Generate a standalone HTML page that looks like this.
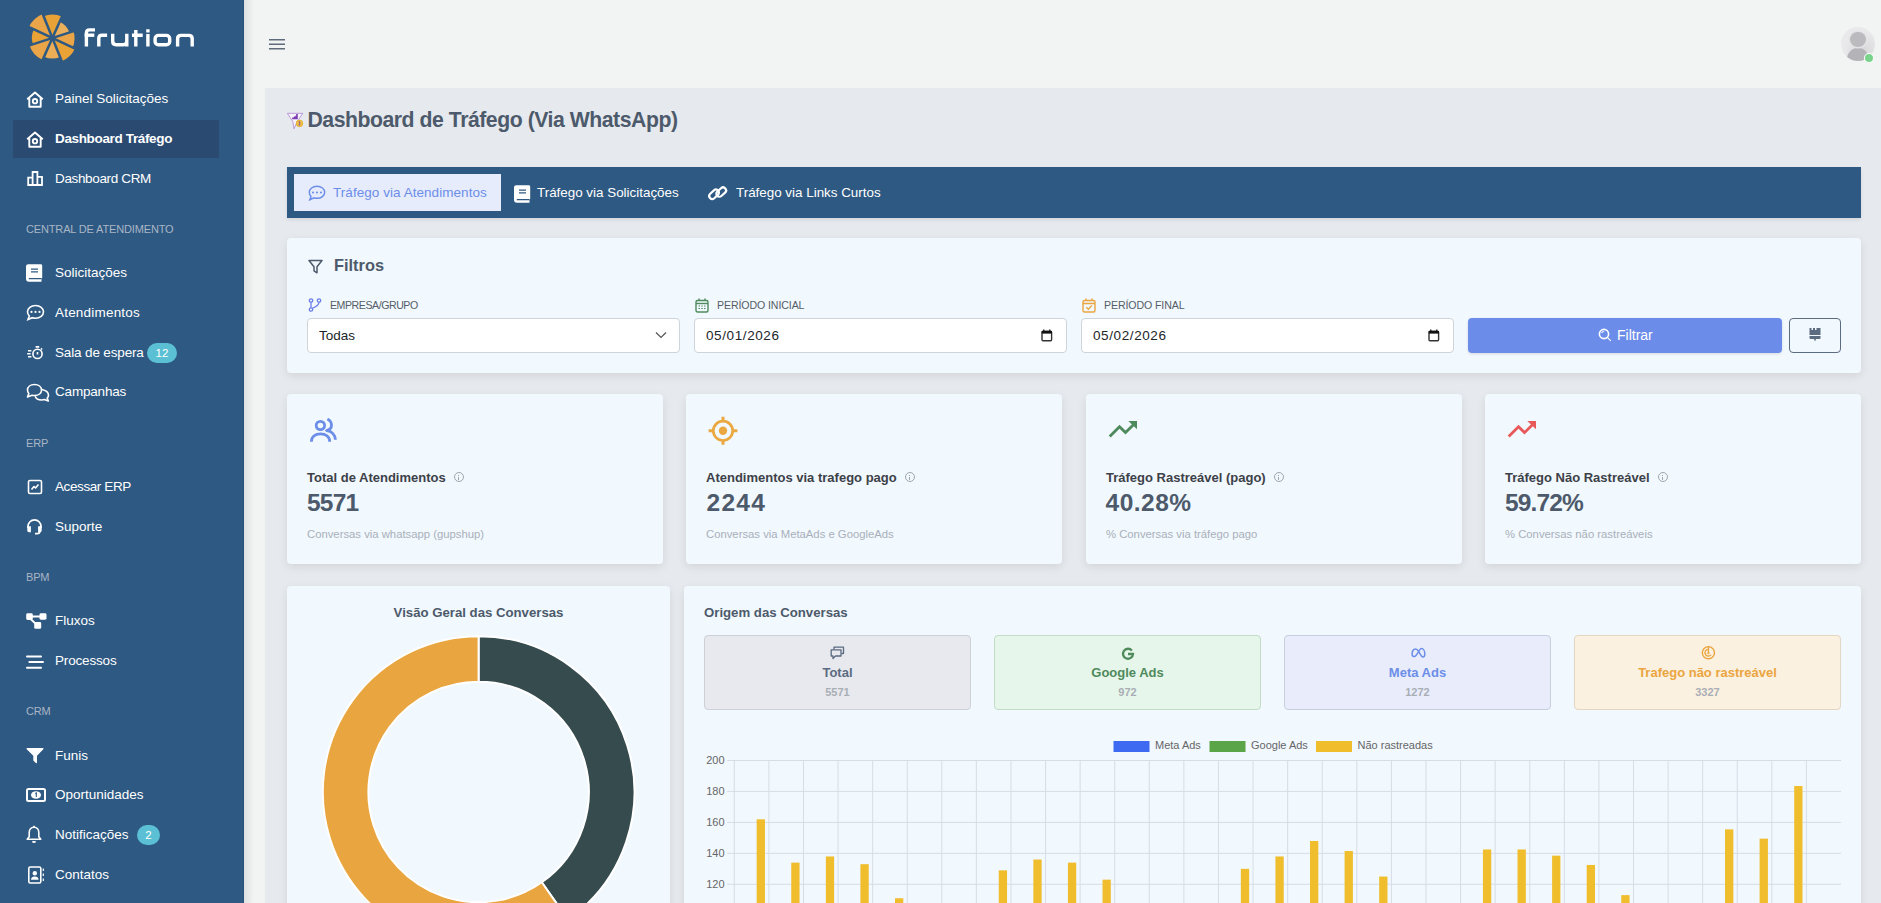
<!DOCTYPE html>
<html lang="pt">
<head>
<meta charset="utf-8">
<title>Dashboard de Tráfego</title>
<style>
*{box-sizing:border-box;margin:0;padding:0}
html,body{width:1881px;height:903px;overflow:hidden}
body{font-family:"Liberation Sans",sans-serif;background:#e6e9ed;position:relative;color:#4a5668}
.abs{position:absolute}
#sidebar{position:absolute;left:0;top:0;width:244px;height:903px;background:#2e5982;border-right:1px solid #2a5179}
#header{position:absolute;left:244px;top:0;width:1637px;height:88px;background:#f2f4f3}
#hshadow{position:absolute;left:244px;top:0;width:10px;height:903px;background:linear-gradient(to right,#dfe1e1,rgba(242,244,243,0))}
#leftstrip{position:absolute;left:244px;top:88px;width:21px;height:815px;background:#f2f4f3}
#content{position:absolute;left:265px;top:88px;width:1616px;height:815px;background:#e6e9ed}
.nav{position:absolute;left:0;width:244px;height:38px;color:#fff;font-size:13.5px}
.nav .ic{position:absolute;left:26px;top:11px;width:17px;height:17px}
.nav .tx{position:absolute;left:55px;top:12px;line-height:16px;white-space:nowrap}
.sec{position:absolute;left:26px;font-size:11px;color:#a9b6c6;letter-spacing:-0.15px}
.badge{position:absolute;background:#5bc0d4;color:#fff;font-size:11.5px;border-radius:10px;height:20px;line-height:20px;text-align:center}
.card{position:absolute;background:#f1f8fe;border-radius:4px;box-shadow:0 3px 10px rgba(0,0,0,.085)}
.lbl{font-size:10.6px;color:#555d66;white-space:nowrap;line-height:12px;letter-spacing:-0.1px}
.inp{height:35px;background:#fff;border:1px solid #cfd4da;border-radius:4px}
.inp span{position:absolute;top:9px;font-size:13.5px;color:#212529;line-height:16px}
.st{font-size:13px;font-weight:bold;color:#3d4148;white-space:nowrap;line-height:15px}
.inf{display:inline-block;width:10px;height:10px;border:1px solid #a0a6ae;border-radius:50%;margin-left:8px;vertical-align:0px;position:relative}
.inf:after{content:"";position:absolute;left:3.5px;top:3.5px;width:1px;height:3.5px;background:#a0a6ae}
.inf:before{content:"";position:absolute;left:3.5px;top:1.5px;width:1px;height:1px;background:#a0a6ae}
.sv{font-size:24px;font-weight:bold;color:#4d5a6b;line-height:28px;white-space:nowrap}
.ss{font-size:11.3px;color:#a9b0ba;white-space:nowrap;line-height:13px}
.ob{width:267px;height:75px;border:1px solid;border-radius:4px}
.on{position:absolute;left:0;width:100%;top:29px;text-align:center;font-size:13px;font-weight:bold;line-height:16px;white-space:nowrap}
.ov{position:absolute;left:0;width:100%;top:50px;text-align:center;font-size:11px;font-weight:bold;color:#a9aeb5;line-height:13px}
</style>
</head>
<body>
<div id="content"></div>
<div id="header"></div>
<div id="leftstrip"></div>
<div id="hshadow"></div>

<!-- SIDEBAR -->
<div id="sidebar">
  <!-- logo -->
  <svg class="abs" style="left:0;top:0" width="244" height="80" viewBox="0 0 244 80">
    <g id="wheel"><path fill="#e8a236" d="M52.4,38.0 L75.06,48.57 A25,25 0 0 1 61.77,61.18 Z"/>
<path fill="#ebae57" d="M52.4,38.0 L60.08,57.01 A20.5,20.5 0 0 1 44.06,56.73 Z"/>
<path fill="#e9a548" d="M52.4,38.0 L42.64,59.93 A24,24 0 0 1 29.57,45.42 Z"/>
<path fill="#e8a236" d="M52.4,38.0 L32.90,44.33 A20.5,20.5 0 0 1 33.82,29.34 Z"/>
<path fill="#e9a548" d="M52.4,38.0 L28.84,27.01 A26,26 0 0 1 42.66,13.89 Z"/>
<path fill="#e8a236" d="M52.4,38.0 L43.60,16.21 A23.5,23.5 0 0 1 61.96,16.53 Z"/>
<path fill="#ebb05c" d="M52.4,38.0 L59.64,21.74 A17.8,17.8 0 0 1 69.33,32.50 Z"/>
<path fill="#e9a548" d="M52.4,38.0 L73.51,31.14 A22.2,22.2 0 0 1 72.52,47.38 Z"/>
<line x1="77.78" y1="49.83" x2="27.02" y2="26.17" stroke="#2e5982" stroke-width="2.5"/>
<line x1="62.89" y1="63.96" x2="41.91" y2="12.04" stroke="#2e5982" stroke-width="2.5"/>
<line x1="41.01" y1="63.58" x2="63.79" y2="12.42" stroke="#2e5982" stroke-width="2.5"/>
<line x1="25.77" y1="46.65" x2="79.03" y2="29.35" stroke="#2e5982" stroke-width="2.5"/>
<circle cx="52.4" cy="38.0" r="2.6" fill="#2e5982"/></g>
    <g fill="none" stroke="#fff" stroke-width="3.4" stroke-linecap="butt">
      <path d="M86.4,46.4 V32.9 Q86.4,29.9 89.4,29.9 H95"/>
      <path d="M84.7,35.2 H94.3"/>
      <path d="M98.8,46.4 V38.3 Q98.8,35.3 101.8,35.3 H107.1"/>
      <path d="M112.7,33.7 V41.2 Q112.7,44.7 116.2,44.7 H123.3 Q126.8,44.7 126.8,41.2 V33.7 M126.8,41 V46.4"/>
      <path d="M135.8,29.9 V46.4 M132,35.3 H142.7"/>
      <path d="M147.9,34 V46.4 M147.9,29.2 V32.6"/>
      <rect x="155.1" y="35.4" width="14.6" height="9.3" rx="3.3"/>
      <path d="M177.6,46.4 V38.8 Q177.6,35.4 181,35.4 H188.8 Q192.2,35.4 192.2,38.8 V46.4"/>
    </g>
  </svg>

  <!-- nav -->
  <div class="nav" style="top:79px">
    <svg class="ic" style="left:26px;top:12px;width:18px;height:17px" viewBox="0 0 18 17" fill="none" stroke="#fff" stroke-width="1.9" stroke-linejoin="round"><path d="M1.2,8.3 L9,1.5 L16.8,8.3 M3.3,6.8 V15.8 H14.7 V6.8"/><circle cx="9" cy="10.2" r="2.2"/></svg>
    <span class="tx">Painel Solicitações</span></div>
  <div style="position:absolute;left:13px;top:120px;width:206px;height:38px;background:#2a4a72"></div>
  <div class="nav" style="top:119px">
    <svg class="ic" style="left:26px;top:12px;width:18px;height:17px" viewBox="0 0 18 17" fill="none" stroke="#fff" stroke-width="1.9" stroke-linejoin="round"><path d="M1.2,8.3 L9,1.5 L16.8,8.3 M3.3,6.8 V15.8 H14.7 V6.8"/><circle cx="9" cy="10.2" r="2.2"/></svg>
    <span class="tx" style="font-weight:bold;letter-spacing:-0.35px">Dashboard Tráfego</span></div>
  <div class="nav" style="top:159px">
    <svg class="ic" style="left:26px;top:11px;width:18px;height:17px" viewBox="0 0 18 17" fill="none" stroke="#fff" stroke-width="1.8" stroke-linejoin="miter"><path d="M2.2,15 V7.7 H6.6 V15 M6.6,15 V2 H11.4 V15 M11.4,15 V6.8 H16 V15 M1.3,15 H16.9"/></svg>
    <span class="tx" style="letter-spacing:-0.35px">Dashboard CRM</span></div>

  <div class="sec" style="top:223px">CENTRAL DE ATENDIMENTO</div>

  <div class="nav" style="top:253px">
    <svg class="ic" style="left:26px;top:11px;width:17px;height:18px" viewBox="0 0 17 18"><path fill="#fff" d="M2.2,0.3 H14.8 Q16.2,0.3 16.2,1.7 V13.8 Q16.2,14.5 15.5,14.8 V17.7 H3 Q0,17.7 0,14.7 V2.5 Q0,0.3 2.2,0.3 Z"/><path fill="none" stroke="#2e5982" stroke-width="1.3" d="M5,5.2 H12 M5,7.9 H12 M2.8,14.6 H15.6"/></svg>
    <span class="tx">Solicitações</span></div>
  <div class="nav" style="top:293px">
    <svg class="ic" style="width:19px;height:17px" viewBox="0 0 19 17" fill="none" stroke="#fff" stroke-width="1.6"><path d="M9.5,1.5 C14,1.5 17.5,4.2 17.5,7.8 C17.5,11.4 14,14.2 9.5,14.2 C8.4,14.2 7.3,14 6.3,13.7 L2,15.5 L3.3,12 C2.2,10.9 1.5,9.4 1.5,7.8 C1.5,4.2 5,1.5 9.5,1.5 Z"/><circle cx="5.5" cy="7.9" r="1.1" fill="#fff" stroke="none"/><circle cx="9.5" cy="7.9" r="1.1" fill="#fff" stroke="none"/><circle cx="13.5" cy="7.9" r="1.1" fill="#fff" stroke="none"/></svg>
    <span class="tx" style="letter-spacing:0.2px">Atendimentos</span></div>
  <div class="nav" style="top:333px">
    <svg class="ic" style="left:27px;top:13px;width:17px;height:15px" viewBox="0 0 17 15" fill="none" stroke="#fff" stroke-width="1.6"><circle cx="10.5" cy="7.9" r="4.6"/><path d="M8.6,0.9 H12.2 M14,3.5 L15.1,2.4 M10.5,6 V8.5 M1,4.8 H4.4 M0.2,7.8 H3.6 M1,10.7 H4.4"/></svg>
    <span class="tx" style="letter-spacing:-0.15px">Sala de espera</span></div>
  <div class="badge" style="left:147px;top:343px;width:30px">12</div>
  <div class="nav" style="top:372px">
    <svg class="ic" style="width:24px;height:19px;top:11px" viewBox="0 0 24 19" fill="none" stroke="#fff" stroke-width="1.6" stroke-linejoin="round"><path d="M8.5,1.5 C12.6,1.5 15.5,3.8 15.5,7 C15.5,10.2 12.6,12.5 8.5,12.5 C7.6,12.5 6.8,12.4 6,12.2 L1.5,14 L2.8,10.6 C2,9.6 1.5,8.4 1.5,7 C1.5,3.8 4.4,1.5 8.5,1.5 Z"/><path d="M15.6,6.5 C19.4,7.2 22.5,9.4 22.5,12.2 C22.5,13.3 22,14.3 21.2,15.1 L22.3,18 L18.4,16.6 C17.6,16.9 16.6,17 15.6,17 C12.4,17 10,15.6 9.2,13.2"/></svg>
    <span class="tx" style="letter-spacing:-0.18px">Campanhas</span></div>

  <div class="sec" style="top:437px">ERP</div>

  <div class="nav" style="top:467px">
    <svg class="ic" style="left:27px;top:12px;width:16px;height:16px" viewBox="0 0 16 16" fill="none" stroke="#fff" stroke-width="1.6" stroke-linejoin="round"><rect x="1.5" y="1.5" width="13" height="13" rx="1.5"/><path d="M4.5,10.5 L7,7.5 L8.5,9 L11.5,5.5"/></svg>
    <span class="tx" style="letter-spacing:-0.4px">Acessar ERP</span></div>
  <div class="nav" style="top:507px">
    <svg class="ic" style="left:26px;top:11px;width:17px;height:17px" viewBox="0 0 17 17" fill="none" stroke="#fff" stroke-width="1.7"><path d="M2,10 V8.5 C2,4.7 4.9,1.8 8.5,1.8 C12.1,1.8 15,4.7 15,8.5 V10"/><path fill="#fff" d="M2,9 H4.2 V13.5 H3 Q2,13.5 2,12.5 Z M15,9 H12.8 V13.5 H14 Q15,13.5 15,12.5 Z" stroke-width="1.4"/><path d="M13.8,13.5 Q13.8,15.6 11,15.6 H9"/></svg>
    <span class="tx">Suporte</span></div>

  <div class="sec" style="top:571px">BPM</div>

  <div class="nav" style="top:601px">
    <svg class="ic" style="left:26px;width:21px;height:18px;top:11px" viewBox="0 0 21 18" fill="#fff"><rect x="0.2" y="1.3" width="6.6" height="6.7" rx="1.4"/><rect x="13.5" y="1.3" width="7" height="6.4" rx="1.4"/><rect x="8.2" y="10" width="7" height="6.8" rx="1.4"/><path d="M5,4.5 H14.5 M3.5,6 L10.5,12.5" stroke="#fff" stroke-width="1.8"/></svg>
    <span class="tx">Fluxos</span></div>
  <div class="nav" style="top:641px">
    <svg class="ic" style="width:18px;height:16px;top:12px" viewBox="0 0 18 16" fill="#fff"><rect x="0" y="2.5" width="16" height="2" rx="1"/><rect x="2.4" y="8" width="15.6" height="2" rx="1"/><rect x="0" y="13.8" width="16" height="2" rx="1"/></svg>
    <span class="tx" style="letter-spacing:-0.17px">Processos</span></div>

  <div class="sec" style="top:705px">CRM</div>

  <div class="nav" style="top:736px">
    <svg class="ic" style="width:18px;height:17px;top:11px" viewBox="0 0 18 17" fill="#fff"><path d="M0.8,1 H17.2 Q17.8,1.3 17.3,2.2 L11,8.8 V15.8 Q10.6,16.6 9.8,16 L7.3,13.6 V8.8 L0.7,2.2 Q0.3,1.3 0.8,1 Z"/></svg>
    <span class="tx">Funis</span></div>
  <div class="nav" style="top:775px">
    <svg class="ic" style="width:20px;height:14px;top:13px" viewBox="0 0 20 14"><rect x="1" y="1" width="18" height="12" rx="1.5" fill="none" stroke="#fff" stroke-width="2"/><ellipse cx="10" cy="7" rx="5" ry="3.8" fill="#fff"/><path d="M9.2,5.6 L10.3,5 V9" stroke="#2e5982" stroke-width="1.1" fill="none"/></svg>
    <span class="tx">Oportunidades</span></div>
  <div class="nav" style="top:815px">
    <svg class="ic" style="left:26px;top:10px;width:16px;height:19px" viewBox="0 0 16 19" fill="none" stroke="#fff" stroke-width="1.6" stroke-linejoin="round"><path d="M8,2.2 C5,2.2 3.2,4.6 3.2,7.5 V11.8 L1.2,14.2 H14.8 L12.8,11.8 V7.5 C12.8,4.6 11,2.2 8,2.2 Z"/><path d="M8,0.8 V2.2"/><path d="M6.4,16.4 Q8,17.8 9.6,16.4" stroke-width="1.5"/></svg>
    <span class="tx">Notificações</span></div>
  <div class="badge" style="left:137px;top:825px;width:23px">2</div>
  <div class="nav" style="top:855px">
    <svg class="ic" style="left:27px;top:11px;width:18px;height:18px" viewBox="0 0 18 18" fill="none" stroke="#fff" stroke-width="1.6"><rect x="1.8" y="1" width="12" height="16" rx="1.5"/><circle cx="7.8" cy="7.2" r="2.2" fill="#fff" stroke="none"/><path d="M4,13.8 Q4.2,10.5 7.8,10.5 Q11.4,10.5 11.6,13.8 Z" fill="#fff" stroke="none"/><path d="M16.3,2.5 V5 M16.3,7.5 V10 M16.3,12.5 V15" stroke-width="1.2"/></svg>
    <span class="tx">Contatos</span></div>
</div>

<!-- HEADER -->
<svg class="abs" style="left:269px;top:39px" width="16" height="11" viewBox="0 0 16 11"><path d="M0,0.8 H16 M0,5.3 H16 M0,9.8 H16" stroke="#5f6b7a" stroke-width="1.5"/></svg>
<div class="abs" style="left:1841px;top:27px;width:34px;height:34px;border-radius:50%;background:radial-gradient(circle at 65% 70%,#d8d8da,#e9e9eb 60%);overflow:hidden">
  <div class="abs" style="left:5.8px;top:21px;width:22.4px;height:22px;border-radius:11.2px 11.2px 0 0;background:#b3b3b8"></div>
  <div class="abs" style="left:9.2px;top:4.9px;width:15.6px;height:15.6px;border-radius:50%;background:#bbbbbf;box-shadow:0 0 0 1.5px #e4e4e6"></div>
</div>
<div class="abs" style="left:1863.6px;top:52.8px;width:10.8px;height:10.4px;border-radius:50%;background:#7ad38a;border:1.5px solid #fff"></div>

<!-- TITLE -->
<svg class="abs" style="left:286px;top:112px" width="18" height="18" viewBox="0 0 18 18">
  <path d="M1.3,1.3 H16.8 L11.3,9.5 L8,16.8 L6.8,9.5 Z" fill="#f7f4fa" stroke="#b48fd8" stroke-width="0.9" stroke-linejoin="round"/>
  <path d="M6.2,7.2 V5.4 H7.8 V4.5 H9.5 V3.6 H10.2 V2 H11.8 V7.2 Z" fill="#7b3fb3"/>
  <circle cx="13.5" cy="11.4" r="3.3" fill="#f3c23e" stroke="#dca82a" stroke-width="0.7"/>
  <path d="M12.6,10 Q13.5,9.3 14,10.2 Q14.2,11 13.4,11.4 Q14.3,11.8 13.9,12.6 Q13.4,13.4 12.6,12.8" stroke="#7b3fb3" stroke-width="1" fill="none"/>
</svg>
<div class="abs" style="left:307.5px;top:107px;font-size:21.2px;font-weight:bold;color:#4d5a6b;white-space:nowrap;letter-spacing:-0.45px;line-height:25px">Dashboard de Tráfego (Via WhatsApp)</div>

<!-- TABS -->
<div class="abs" style="left:287px;top:167px;width:1574px;height:51px;background:#2e5982;box-shadow:0 2px 4px rgba(0,0,0,.08)"></div>
<div class="abs" style="left:294px;top:174px;width:207px;height:37px;background:#e7ecfc"></div>
<svg class="abs" style="left:308px;top:185px" width="18" height="16" viewBox="0 0 18 16" fill="none" stroke="#6c8ee8" stroke-width="1.5"><path d="M9,1.3 C13.3,1.3 16.7,3.9 16.7,7.3 C16.7,10.7 13.3,13.3 9,13.3 C8,13.3 7,13.1 6.1,12.9 L1.8,14.8 L3,11.5 C2,10.4 1.3,8.9 1.3,7.3 C1.3,3.9 4.7,1.3 9,1.3 Z"/><circle cx="5" cy="7.5" r="1.05" fill="#6c8ee8" stroke="none"/><circle cx="9" cy="7.5" r="1.05" fill="#6c8ee8" stroke="none"/><circle cx="13" cy="7.5" r="1.05" fill="#6c8ee8" stroke="none"/></svg>
<div class="abs" style="left:333px;top:185px;font-size:13.5px;color:#6c8ee8;white-space:nowrap;line-height:16px;letter-spacing:0.05px">Tráfego via Atendimentos</div>
<svg class="abs" style="left:514px;top:184.5px" width="17" height="18" viewBox="0 0 17 18"><path fill="#fff" d="M2.2,0.3 H14.8 Q16.2,0.3 16.2,1.7 V13.8 Q16.2,14.5 15.5,14.8 V17.7 H3 Q0,17.7 0,14.7 V2.5 Q0,0.3 2.2,0.3 Z"/><path fill="none" stroke="#2e5982" stroke-width="1.3" d="M5,5.2 H12 M5,7.9 H12 M2.8,14.6 H15.6"/></svg>
<div class="abs" style="left:537px;top:185px;font-size:13.4px;color:#fff;white-space:nowrap;line-height:16px">Tráfego via Solicitações</div>
<svg class="abs" style="left:705px;top:183px" width="25" height="20" viewBox="0 0 25 20" fill="none" stroke="#fff" stroke-width="2.2"><rect x="3.6" y="8.3" width="11" height="6" rx="3" transform="rotate(-42 9.1 11.3)"/><rect x="10.7" y="6.1" width="11" height="6" rx="3" transform="rotate(-42 16.2 9.1)"/></svg>
<div class="abs" style="left:736px;top:185px;font-size:13.4px;color:#fff;white-space:nowrap;line-height:16px">Tráfego via Links Curtos</div>

<!-- FILTER CARD -->
<div class="card" style="left:287px;top:238px;width:1574px;height:135px"></div>
<svg class="abs" style="left:308px;top:259px" width="15" height="15" viewBox="0 0 15 15" fill="none" stroke="#4d5a6b" stroke-width="1.5" stroke-linejoin="round"><path d="M1,1.5 H14 L9,7.8 V13.8 L6,11.8 V7.8 Z"/></svg>
<div class="abs" style="left:334px;top:256px;font-size:16.4px;font-weight:bold;color:#4d5a6b;line-height:19px">Filtros</div>

<svg class="abs" style="left:308px;top:298px" width="14" height="14" viewBox="0 0 14 14" fill="none" stroke="#6c7fe6" stroke-width="1.3"><circle cx="3" cy="2.5" r="1.7"/><circle cx="3" cy="11.5" r="1.7"/><circle cx="11" cy="2.5" r="1.7"/><path d="M3,4.2 V9.8 M11,4.2 C11,7.5 8,8.5 4.2,10.4"/></svg>
<div class="lbl abs" style="left:330px;top:299px;letter-spacing:-0.45px">EMPRESA/GRUPO</div>
<div class="inp abs" style="left:307px;top:318px;width:373px"><span style="left:11px">Todas</span>
  <svg class="abs" style="left:347px;top:12px" width="12" height="8" viewBox="0 0 12 8" fill="none" stroke="#555" stroke-width="1.2"><path d="M1,1.5 L6,6.5 L11,1.5"/></svg></div>

<svg class="abs" style="left:695px;top:298px" width="14" height="15" viewBox="0 0 14 15"><rect x="1" y="2.5" width="12" height="11.5" rx="1.5" fill="none" stroke="#4f8a5c" stroke-width="1.4"/><path d="M1,5.5 H13" stroke="#4f8a5c" stroke-width="1.4"/><path d="M4,0.5 V3 M10,0.5 V3" stroke="#4f8a5c" stroke-width="1.4"/><path d="M3.5,8 H5 M6.3,8 H7.7 M9,8 H10.5 M3.5,10.5 H5 M6.3,10.5 H7.7 M9,10.5 H10.5" stroke="#4f8a5c" stroke-width="1.1"/></svg>
<div class="lbl abs" style="left:717px;top:299px">PERÍODO INICIAL</div>
<div class="inp abs" style="left:694px;top:318px;width:373px"><span style="left:11px;font-size:13.5px;letter-spacing:0.6px">05/01/2026</span>
  <svg class="abs" style="left:346px;top:10px" width="12" height="13" viewBox="0 0 12 13"><rect x="1" y="2.2" width="9.6" height="9.5" rx="1" fill="none" stroke="#333" stroke-width="1.4"/><rect x="0.8" y="2" width="10" height="2.6" fill="#111"/><path d="M2.8,0.4 V2.4 M8.8,0.4 V2.4" stroke="#111" stroke-width="1.2"/></svg></div>

<svg class="abs" style="left:1082px;top:298px" width="14" height="15" viewBox="0 0 14 15" fill="none" stroke="#eba540" stroke-width="1.4"><rect x="1" y="2.5" width="12" height="11.5" rx="1.5"/><path d="M1,5.5 H13 M4,0.5 V3 M10,0.5 V3 M4.3,9.3 L6.3,11.2 L9.8,7.6"/></svg>
<div class="lbl abs" style="left:1104px;top:299px">PERÍODO FINAL</div>
<div class="inp abs" style="left:1081px;top:318px;width:373px"><span style="left:11px;font-size:13.5px;letter-spacing:0.6px">05/02/2026</span>
  <svg class="abs" style="left:346px;top:10px" width="12" height="13" viewBox="0 0 12 13"><rect x="1" y="2.2" width="9.6" height="9.5" rx="1" fill="none" stroke="#333" stroke-width="1.4"/><rect x="0.8" y="2" width="10" height="2.6" fill="#111"/><path d="M2.8,0.4 V2.4 M8.8,0.4 V2.4" stroke="#111" stroke-width="1.2"/></svg></div>

<div class="abs" style="left:1468px;top:318px;width:314px;height:35px;background:#6b8de9;border-radius:4px;box-shadow:0 1px 3px rgba(0,0,0,.12)"></div>
<svg class="abs" style="left:1598px;top:328px" width="14" height="14" viewBox="0 0 14 14" fill="none" stroke="#fff" stroke-width="1.6"><circle cx="6" cy="6" r="4.6"/><path d="M9.4,9.4 L12.8,12.8 M3.6,5 Q4.4,3.4 6.2,3.5" stroke-width="1.2"/></svg>
<div class="abs" style="left:1617px;top:327px;font-size:14px;color:#fff;line-height:16px">Filtrar</div>
<div class="abs" style="left:1789px;top:318px;width:52px;height:35px;border:1px solid #5b6b80;border-radius:4px"></div>
<svg class="abs" style="left:1808px;top:327px" width="14" height="16" viewBox="0 0 14 16" fill="#5b6b80"><path d="M1.5,1 H3.5 V3 H5 V1 H7 V3 H8.5 V1 H10.5 H12.5 V8 H1.5 Z"/><path d="M1.5,9 H12.5 V11 Q12.5,12 11.5,12 H8 L7,14.5 L6,12 H2.5 Q1.5,12 1.5,11 Z"/></svg>

<!-- STAT CARDS -->
<div class="card" style="left:287px;top:394px;width:376px;height:170px"></div>
<div class="card" style="left:686px;top:394px;width:376px;height:170px"></div>
<div class="card" style="left:1086px;top:394px;width:376px;height:170px"></div>
<div class="card" style="left:1485px;top:394px;width:376px;height:170px"></div>

<svg class="abs" style="left:308px;top:418px" width="30" height="26" viewBox="0 0 30 26" fill="none" stroke="#6c8ee8" stroke-width="2.8" stroke-linecap="butt" stroke-linejoin="round"><circle cx="12.4" cy="7.5" r="4.2"/><path d="M3.4,23.8 C3.4,18.5 7.5,15.8 12.5,15.8 C17.5,15.8 21.7,18.5 21.7,23.8"/><path d="M19.4,1.1 C22,2.4 23.5,4.8 23.5,7.2 C23.5,9.6 21.6,11.8 18.6,12.5 C23.5,13.1 27.2,16.5 27.4,21.8"/></svg>
<svg class="abs" style="left:708px;top:416px" width="30" height="30" viewBox="0 0 30 30" fill="none" stroke="#eba840" stroke-width="2.7"><circle cx="15" cy="14.8" r="9.7"/><circle cx="15" cy="14.8" r="4.2" fill="#eba840" stroke="none"/><path d="M15,0.8 V5.5 M15,24.1 V28.8 M0.6,14.8 H5.4 M24.6,14.8 H29.4" stroke-width="3"/></svg>
<svg class="abs" style="left:1108px;top:419px" width="30" height="20" viewBox="0 0 30 20" fill="none" stroke="#4f8a5c" stroke-width="2.8"><path d="M1.7,17.6 L11.5,7.8 L17.5,13.6 L25.2,6.1"/><path d="M20.3,2.1 H29 V10.3 Z" fill="#4f8a5c" stroke="none"/></svg>
<svg class="abs" style="left:1507px;top:419px" width="30" height="20" viewBox="0 0 30 20" fill="none" stroke="#e85a5a" stroke-width="2.8"><path d="M1.7,17.6 L11.5,7.8 L17.5,13.6 L25.2,6.1"/><path d="M20.3,2.1 H29 V10.3 Z" fill="#e85a5a" stroke="none"/></svg>

<div class="st abs" style="left:307px;top:470px">Total de Atendimentos<i class="inf"></i></div>
<div class="sv abs" style="left:307px;top:489px;font-size:24.5px;letter-spacing:-0.8px">5571</div>
<div class="ss abs" style="left:307px;top:528px">Conversas via whatsapp (gupshup)</div>
<div class="st abs" style="left:706px;top:470px">Atendimentos via trafego pago<i class="inf"></i></div>
<div class="sv abs" style="left:706.5px;top:489px;font-size:24.5px;letter-spacing:1.3px">2244</div>
<div class="ss abs" style="left:706px;top:528px">Conversas via MetaAds e GoogleAds</div>
<div class="st abs" style="left:1106px;top:470px">Tráfego Rastreável (pago)<i class="inf"></i></div>
<div class="sv abs" style="left:1105.5px;top:489px;font-size:24.5px;letter-spacing:0.5px">40.28%</div>
<div class="ss abs" style="left:1106px;top:528px">% Conversas via tráfego pago</div>
<div class="st abs" style="left:1505px;top:470px">Tráfego Não Rastreável<i class="inf"></i></div>
<div class="sv abs" style="left:1505px;top:489px;font-size:24.5px;letter-spacing:-0.85px">59.72%</div>
<div class="ss abs" style="left:1505px;top:528px">% Conversas não rastreáveis</div>

<!-- CHART CARDS -->
<div class="card" style="left:287px;top:586px;width:383px;height:340px"></div>
<div class="abs" style="left:287px;top:605px;width:383px;text-align:center;font-size:13.2px;font-weight:bold;color:#4d5a6b;line-height:16px">Visão Geral das Conversas</div>
<svg class="abs" style="left:0;top:0" width="1881" height="903" viewBox="0 0 1881 903">
  <path d="M478.60,636.20 A155.8,155.8 0 0 1 567.95,919.64 L541.80,882.28 A110.2,110.2 0 0 0 478.60,681.80 Z" fill="#364b4e" stroke="#fff" stroke-width="2"/>
  <path d="M567.95,919.64 A155.8,155.8 0 1 1 478.60,636.20 L478.60,681.80 A110.2,110.2 0 1 0 541.80,882.28 Z" fill="#e9a640" stroke="#fff" stroke-width="2"/>
</svg>
<div class="card" style="left:684px;top:586px;width:1177px;height:340px"></div>
<div class="abs" style="left:704px;top:605px;font-size:13.2px;font-weight:bold;color:#4d5a6b;line-height:16px">Origem das Conversas</div>

<div class="ob abs" style="left:704px;top:635px;background:#e7e9ee;border-color:#cdd1d7">
  <svg class="abs" style="left:125px;top:10px" width="15" height="14" viewBox="0 0 15 14" fill="none" stroke="#5b6b80" stroke-width="1.3" stroke-linejoin="round"><path d="M4,3.5 V1.2 H13.5 V7.5 H11.5"/><path d="M1.2,3.8 H11 V10 H5.5 L3,12.5 V10 H1.2 Z"/></svg>
  <div class="on" style="color:#5b6b80">Total</div><div class="ov">5571</div></div>
<div class="ob abs" style="left:994px;top:635px;background:#e6f6ea;border-color:#c2dcc8">
  <svg class="abs" style="left:125px;top:10px" width="16" height="16" viewBox="0 0 16 16" fill="none" stroke="#4f8a5c" stroke-width="2.3"><path d="M11.9,4.6 A5,5 0 1 0 13,8 H8"/></svg>
  <div class="on" style="color:#4f8a5c">Google Ads</div><div class="ov">972</div></div>
<div class="ob abs" style="left:1284px;top:635px;background:#e8ecfb;border-color:#c9cfe0">
  <svg class="abs" style="left:125px;top:10px" width="17" height="13" viewBox="0 0 17 13" fill="none" stroke="#6c8ee8" stroke-width="1.5"><path d="M8.7,5.4 C7.5,3.5 6.6,2.9 5.4,2.9 C3.2,2.9 2.1,5.5 2.1,7.9 C2.1,9.6 3,10.6 4.3,10.6 C5.8,10.6 7,8.5 8.7,5.4 C10.3,2.9 10.8,2.6 11.5,2.6 C13.5,2.6 14.8,5.3 14.8,7.9 C14.8,9.8 14,10.9 12.9,10.9 C11.3,10.9 10.2,8 8.7,5.4 Z"/></svg>
  <div class="on" style="color:#6c8ee8">Meta Ads</div><div class="ov">1272</div></div>
<div class="ob abs" style="left:1574px;top:635px;background:#fbf1e1;border-color:#e3d6c2">
  <svg class="abs" style="left:125px;top:9px" width="17" height="16" viewBox="0 0 17 16" fill="none" stroke="#eba540" stroke-width="1.4"><circle cx="8.4" cy="7.7" r="6.1"/><path d="M7.81,4.35 A3.4,3.4 0 1 0 11,9.89"/><path d="M8.4,1.6 V7.7"/><circle cx="8.4" cy="8.2" r="1.1" fill="#eba540" stroke="none"/></svg>
  <div class="on" style="color:#eba540">Trafego não rastreável</div><div class="ov">3327</div></div>

<svg class="abs" style="left:0;top:0" width="1881" height="903" viewBox="0 0 1881 903" font-family="Liberation Sans" font-size="11" fill="#666">
  <rect x="1113.5" y="741" width="36" height="11" fill="#3d6af1"/>
  <text x="1155" y="748.7">Meta Ads</text>
  <rect x="1209.5" y="741" width="36" height="11" fill="#5aa548"/>
  <text x="1251" y="748.7">Google Ads</text>
  <rect x="1316" y="741" width="36" height="11" fill="#f0bd2c"/>
  <text x="1357.5" y="748.7">Não rastreadas</text>
  <path d="M727,760.50 H1841" stroke="#d8dde5" stroke-width="1"/><path d="M727,791.45 H1841" stroke="#d8dde5" stroke-width="1"/><path d="M727,822.40 H1841" stroke="#d8dde5" stroke-width="1"/><path d="M727,853.35 H1841" stroke="#d8dde5" stroke-width="1"/><path d="M727,884.30 H1841" stroke="#d8dde5" stroke-width="1"/><path d="M727,915.25 H1841" stroke="#d8dde5" stroke-width="1"/><path d="M734.30,760.5 V910" stroke="#d8dde5" stroke-width="1"/><path d="M768.88,760.5 V910" stroke="#d8dde5" stroke-width="1"/><path d="M803.47,760.5 V910" stroke="#d8dde5" stroke-width="1"/><path d="M838.05,760.5 V910" stroke="#d8dde5" stroke-width="1"/><path d="M872.64,760.5 V910" stroke="#d8dde5" stroke-width="1"/><path d="M907.22,760.5 V910" stroke="#d8dde5" stroke-width="1"/><path d="M941.81,760.5 V910" stroke="#d8dde5" stroke-width="1"/><path d="M976.39,760.5 V910" stroke="#d8dde5" stroke-width="1"/><path d="M1010.97,760.5 V910" stroke="#d8dde5" stroke-width="1"/><path d="M1045.56,760.5 V910" stroke="#d8dde5" stroke-width="1"/><path d="M1080.14,760.5 V910" stroke="#d8dde5" stroke-width="1"/><path d="M1114.73,760.5 V910" stroke="#d8dde5" stroke-width="1"/><path d="M1149.31,760.5 V910" stroke="#d8dde5" stroke-width="1"/><path d="M1183.90,760.5 V910" stroke="#d8dde5" stroke-width="1"/><path d="M1218.48,760.5 V910" stroke="#d8dde5" stroke-width="1"/><path d="M1253.07,760.5 V910" stroke="#d8dde5" stroke-width="1"/><path d="M1287.65,760.5 V910" stroke="#d8dde5" stroke-width="1"/><path d="M1322.23,760.5 V910" stroke="#d8dde5" stroke-width="1"/><path d="M1356.82,760.5 V910" stroke="#d8dde5" stroke-width="1"/><path d="M1391.40,760.5 V910" stroke="#d8dde5" stroke-width="1"/><path d="M1425.99,760.5 V910" stroke="#d8dde5" stroke-width="1"/><path d="M1460.57,760.5 V910" stroke="#d8dde5" stroke-width="1"/><path d="M1495.16,760.5 V910" stroke="#d8dde5" stroke-width="1"/><path d="M1529.74,760.5 V910" stroke="#d8dde5" stroke-width="1"/><path d="M1564.33,760.5 V910" stroke="#d8dde5" stroke-width="1"/><path d="M1598.91,760.5 V910" stroke="#d8dde5" stroke-width="1"/><path d="M1633.49,760.5 V910" stroke="#d8dde5" stroke-width="1"/><path d="M1668.08,760.5 V910" stroke="#d8dde5" stroke-width="1"/><path d="M1702.66,760.5 V910" stroke="#d8dde5" stroke-width="1"/><path d="M1737.25,760.5 V910" stroke="#d8dde5" stroke-width="1"/><path d="M1771.83,760.5 V910" stroke="#d8dde5" stroke-width="1"/><path d="M1806.42,760.5 V910" stroke="#d8dde5" stroke-width="1"/>
  <text x="724.5" y="763.70" text-anchor="end">200</text><text x="724.5" y="794.65" text-anchor="end">180</text><text x="724.5" y="825.60" text-anchor="end">160</text><text x="724.5" y="856.55" text-anchor="end">140</text><text x="724.5" y="887.50" text-anchor="end">120</text><text x="724.5" y="918.45" text-anchor="end">100</text>
  <rect x="756.66" y="819.30" width="8.30" height="93.70" fill="#f0bd2c"/><rect x="791.25" y="862.63" width="8.30" height="50.37" fill="#f0bd2c"/><rect x="825.83" y="856.44" width="8.30" height="56.56" fill="#f0bd2c"/><rect x="860.42" y="864.18" width="8.30" height="48.82" fill="#f0bd2c"/><rect x="895.00" y="898.23" width="8.30" height="14.77" fill="#f0bd2c"/><rect x="929.59" y="977.15" width="8.30" height="-64.15" fill="#f0bd2c"/><rect x="964.17" y="984.89" width="8.30" height="-71.89" fill="#f0bd2c"/><rect x="998.76" y="870.37" width="8.30" height="42.63" fill="#f0bd2c"/><rect x="1033.34" y="859.54" width="8.30" height="53.46" fill="#f0bd2c"/><rect x="1067.92" y="862.63" width="8.30" height="50.37" fill="#f0bd2c"/><rect x="1102.51" y="879.66" width="8.30" height="33.34" fill="#f0bd2c"/><rect x="1137.09" y="961.67" width="8.30" height="-48.67" fill="#f0bd2c"/><rect x="1171.68" y="980.25" width="8.30" height="-67.25" fill="#f0bd2c"/><rect x="1206.26" y="989.53" width="8.30" height="-76.53" fill="#f0bd2c"/><rect x="1240.85" y="868.83" width="8.30" height="44.17" fill="#f0bd2c"/><rect x="1275.43" y="856.44" width="8.30" height="56.56" fill="#f0bd2c"/><rect x="1310.01" y="840.97" width="8.30" height="72.03" fill="#f0bd2c"/><rect x="1344.60" y="851.03" width="8.30" height="61.97" fill="#f0bd2c"/><rect x="1379.18" y="876.56" width="8.30" height="36.44" fill="#f0bd2c"/><rect x="1413.77" y="969.41" width="8.30" height="-56.41" fill="#f0bd2c"/><rect x="1448.35" y="984.89" width="8.30" height="-71.89" fill="#f0bd2c"/><rect x="1482.94" y="849.48" width="8.30" height="63.52" fill="#f0bd2c"/><rect x="1517.52" y="849.48" width="8.30" height="63.52" fill="#f0bd2c"/><rect x="1552.11" y="855.67" width="8.30" height="57.33" fill="#f0bd2c"/><rect x="1586.69" y="864.96" width="8.30" height="48.04" fill="#f0bd2c"/><rect x="1621.27" y="895.13" width="8.30" height="17.87" fill="#f0bd2c"/><rect x="1655.86" y="974.05" width="8.30" height="-61.05" fill="#f0bd2c"/><rect x="1690.44" y="984.89" width="8.30" height="-71.89" fill="#f0bd2c"/><rect x="1725.03" y="829.36" width="8.30" height="83.64" fill="#f0bd2c"/><rect x="1759.61" y="838.65" width="8.30" height="74.35" fill="#f0bd2c"/><rect x="1794.20" y="786.03" width="8.30" height="126.97" fill="#f0bd2c"/><rect x="1828.78" y="1008.10" width="8.30" height="-95.10" fill="#f0bd2c"/>
</svg>

</body>
</html>
